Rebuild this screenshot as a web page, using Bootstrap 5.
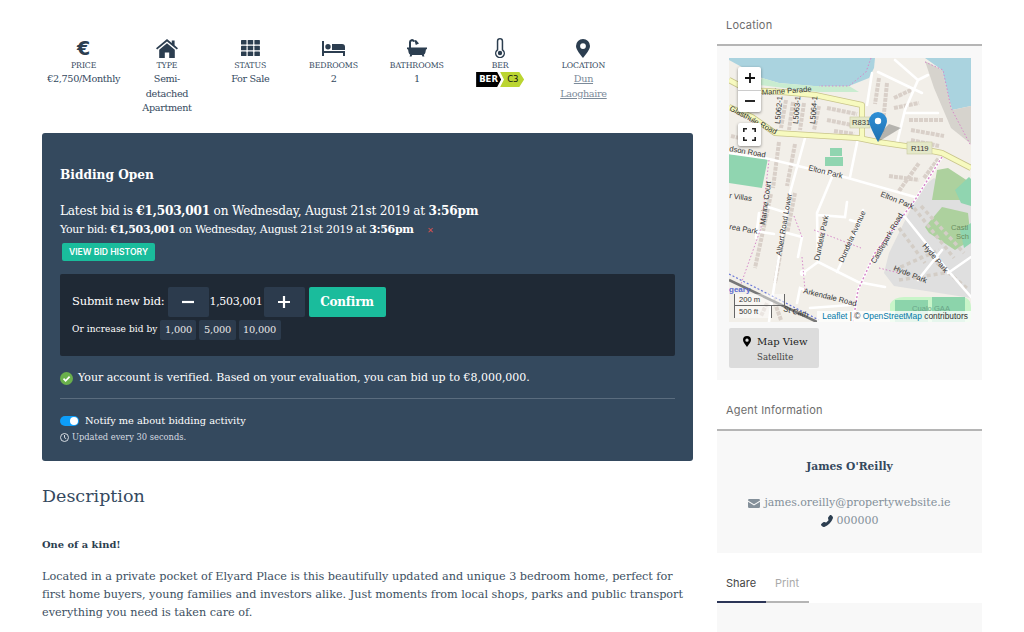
<!DOCTYPE html>
<html lang="en">
<head>
<meta charset="utf-8">
<title>Property</title>
<link href="https://cdn.jsdelivr.net/npm/bootstrap@5.3.0/dist/css/bootstrap.min.css" rel="stylesheet">
<style>
html,body{height:632px;overflow:hidden;background:#fff}
body{font-family:"DejaVu Serif","Liberation Serif",serif;color:#34495e;font-size:11.5px}
.page-wrap{padding-left:42px;gap:24px}
.main-col{width:651px;flex:none}
.side-col{width:265px;flex:none}
.facts{padding-top:38px;height:133px}
.fact{flex:0 0 83.3px;line-height:14.5px;font-size:9.7px;letter-spacing:-.35px;white-space:nowrap;display:flex;flex-direction:column;align-items:center}
.fact-ico{height:20px;display:flex;align-items:center;justify-content:center}
.fact-ico svg{fill:#2c3e50;display:block}
.euro{font-family:"DejaVu Sans",sans-serif;font-weight:700;font-size:19px;color:#2c3e50;line-height:18px;letter-spacing:0}
.fact-label{font-size:7.8px;text-transform:uppercase;line-height:13px;margin-top:1px;letter-spacing:-.1px}
.fact a{color:#7b8a99}
.ber-tag{display:inline-flex;height:15px;font-family:"DejaVu Sans",sans-serif;font-size:8.5px;line-height:15px;letter-spacing:0}
.ber-a{width:25px;background:#000;color:#fff;font-weight:700;clip-path:polygon(0 0,84% 0,100% 50%,84% 100%,0 100%);padding-left:3px;text-align:left}
.ber-b{width:24px;margin-left:-1px;background:#bbd531;color:#111;clip-path:polygon(0 0,80% 0,100% 50%,80% 100%,0 100%,16% 50%);padding-left:7px;text-align:left}
.bid-panel{background:#34495e;color:#fff;border-radius:3px;height:328px;padding:33px 18px 0}
.bid-title{font-size:12.2px;font-weight:700;line-height:18px;margin:0 0 18px}
.bid-latest{font-size:12.1px;line-height:19px;letter-spacing:-.21px}
.bid-your{font-size:11px;line-height:18px;letter-spacing:-.34px}
.bid-x{color:#d9534f;font-size:8px;margin-left:10px}
.hist-btn{background:#1abc9c;color:#fff;border:0;border-radius:2px;font-family:"Inter",sans-serif;font-weight:600;font-size:8.6px;padding:0;width:93px;height:18px;line-height:18px;margin:3px 0 0 2px;display:block}
.bid-box{background:#1f2935;border-radius:2px;height:82px;margin-top:13px;padding:13px 12px 0}
.bid-lab{font-size:11.5px;letter-spacing:-.2px;margin-right:3px}
.step{background:#2c3b4d;color:#fff;border:0;border-radius:2px;width:41px;height:30px;padding:0;display:flex;align-items:center;justify-content:center}
.step svg{stroke:#fff;stroke-width:2.2}
.confirm{background:#1abc9c;color:#fff;border:0;border-radius:2px;height:30px;width:77px;padding:0;font-size:12px;font-weight:700;letter-spacing:-.2px}
.confirm:hover,.hist-btn:hover{background:#1abc9c;color:#fff}
.bid-val{font-size:11px;width:55px;text-align:center;letter-spacing:-.35px}
.inc-row{margin-top:3px;font-size:9px;height:20px;gap:3px}
.inc-lab{letter-spacing:.07px}
.inc{background:#2c3b4d;color:#e8e8e8;border:0;border-radius:2px;height:20px;padding:0 4.5px;font-size:9.8px;line-height:20px;letter-spacing:-.2px}
.verified{font-size:11px;margin-top:14px;line-height:16px;gap:5px;letter-spacing:-.02px}
.bid-rule{border:0;border-top:1px solid #5a6c7e;opacity:1;margin:12px 0 15px}
.sw-row{height:14px;gap:6px;font-size:9.8px}
.sw{appearance:none;width:19px;height:10px;border-radius:5px;background:#0d9efa;position:relative;margin:0;flex:none}
.sw::after{content:"";position:absolute;right:1px;top:1px;width:8px;height:8px;border-radius:50%;background:#fff}
.upd{font-size:8.3px;color:#d6dbe0;margin-top:2px;line-height:14px;gap:3px}
.desc-h{font-size:17.5px;font-weight:400;line-height:24px;margin:23px 0 0;color:#34495e}
.desc-b{font-size:9.9px;font-weight:700;margin:29px 0 0;line-height:16px;color:#2c3e50}
.desc-p{font-size:11.25px;line-height:18px;margin:15px 0 0;color:#3c4f62;letter-spacing:-.03px}
.side-h{font-family:"Inter","Open Sans",sans-serif;font-size:11px;letter-spacing:.2px;color:#6d6d6d;height:46px;line-height:50px;padding-left:9px;border-bottom:2px solid #b5b5b5;margin:0}
.side-body{background:#f8f8f8}
.map-sec{height:334px;padding:12px 12px 0}
.map-box{position:relative;width:242px;height:264px;overflow:hidden;background:#f2efe9}
.map-box>svg{display:block}
.map-box text{font-family:"Liberation Sans",sans-serif;font-size:7.6px;fill:#333}
.lf-ctl{position:absolute;left:9px;background:#fff;width:23px;box-shadow:0 1px 3px rgba(0,0,0,.45);border-radius:2px;display:flex;flex-direction:column;align-items:center;justify-content:center}
.lf-zoom{top:9px;height:45px}
.lf-zoom span{height:22.5px;width:100%;display:flex;align-items:center;justify-content:center}
.lf-zoom span+span{border-top:1px solid #ccc}
.lf-full{top:65px;height:23px}
.pin{position:absolute;left:140px;top:54px}
.attr{position:absolute;right:0;bottom:0;background:rgba(255,255,255,.78);font-family:"Liberation Sans",sans-serif;font-size:8.4px;line-height:11px;padding:0 3px 0 5px;color:#333;white-space:nowrap}
.attr a{color:#0078a8;text-decoration:none}
.scale-a,.scale-b{position:absolute;left:5px;font-family:"Liberation Sans",sans-serif;font-size:7.6px;color:#333;background:rgba(255,255,255,.45);padding-left:4px;line-height:11px;height:12px;border-left:1.5px solid #666;border-right:1.5px solid #666}
.scale-a{top:236px;width:51px;border-bottom:1.5px solid #666}
.scale-b{top:248px;width:38px}
.map-btn{background:#dcdcdc;border:0;border-radius:2px;width:90px;height:40px;margin-top:6px;display:block;padding:0;color:#333;text-align:left}
.map-btn-t{font-size:10px;line-height:16px;gap:6px;padding-left:14px;padding-top:1px;color:#222}
.map-btn-s{font-size:8.6px;line-height:14px;padding-left:28px;color:#444}
.agent-h{height:51px;line-height:60px}
.agent-body{height:122px;text-align:center;padding-top:28px}
.agent-name{font-size:10.7px;font-weight:700;line-height:16px;color:#34495e;margin:0}
.agent-mail{font-size:11px;color:#84909a;line-height:18px;margin-top:19px;gap:4px;letter-spacing:-.03px}
.agent-tel{font-size:11px;color:#84909a;line-height:18px;gap:4px}
.tabs-row{height:50px;font-family:"Inter","Open Sans",sans-serif;font-size:11px;line-height:60px}
.tab-on{width:49px;padding-left:9px;border-bottom:2px solid #2c3557;color:#444}
.tab-off{width:43px;padding-left:9px;border-bottom:2px solid #b5b5b5;color:#aaa}
.share-body{height:60px}
</style>
</head>
<body>
<div class="d-flex page-wrap">
  <div class="main-col">
    <div class="d-flex facts text-center">
      <div class="fact">
        <div class="fact-ico"><span class="euro">€</span></div>
        <div class="fact-label">Price</div>
        <div>€2,750/Monthly</div>
      </div>
      <div class="fact">
        <div class="fact-ico"><svg width="22" height="19" viewBox="0 0 22 19"><path d="M11 0 15.8 4V1.500h2.800v4.800L22 9.200l-1.200 1.400L11 2.500 1.200 10.600 0 9.200z"/><path d="M11 4.200 3.200 10.700V19h5.600v-5.500h4.400V19h5.600v-8.300z"/></svg></div>
        <div class="fact-label">Type</div>
        <div>Semi-<br>detached<br>Apartment</div>
      </div>
      <div class="fact">
        <div class="fact-ico"><svg width="19" height="16" viewBox="0 0 19 16"><rect width="5.500" height="4.600" rx=".6"/><rect x="6.700" width="5.500" height="4.600" rx=".6"/><rect x="13.400" width="5.500" height="4.600" rx=".6"/><rect y="5.700" width="5.500" height="4.600" rx=".6"/><rect x="6.700" y="5.700" width="5.500" height="4.600" rx=".6"/><rect x="13.400" y="5.700" width="5.500" height="4.600" rx=".6"/><rect y="11.400" width="5.500" height="4.600" rx=".6"/><rect x="6.700" y="11.400" width="5.500" height="4.600" rx=".6"/><rect x="13.400" y="11.400" width="5.500" height="4.600" rx=".6"/></svg></div>
        <div class="fact-label">Status</div>
        <div>For Sale</div>
      </div>
      <div class="fact">
        <div class="fact-ico"><svg width="23" height="15" viewBox="0 0 23 15"><path d="M0 0h2v10h21v5h-2v-3H2v3H0z"/><circle cx="6" cy="5.800" r="2.700"/><path d="M10 3h10a3 3 0 0 1 3 3v3H10z"/></svg></div>
        <div class="fact-label">Bedrooms</div>
        <div>2</div>
      </div>
      <div class="fact">
        <div class="fact-ico"><svg width="20" height="18" viewBox="0 0 20 18"><path d="M2 9V3a3 3 0 0 1 5.600-1.400L9 1l3 3.500-3.200 1.600-1-3.600L6.200 3A1.200 1.200 0 0 0 4 3v6z"/><path d="M0 8.500h20v1.800h-1l-.6 3.200a3 3 0 0 1-1.600 2.200l.6 1.800h-2l-.5-1.500H5.100L4.600 17.500h-2l.6-1.800a3 3 0 0 1-1.600-2.200L1 10.300H0z"/></svg></div>
        <div class="fact-label">Bathrooms</div>
        <div>1</div>
      </div>
      <div class="fact">
        <div class="fact-ico"><svg width="10" height="20" viewBox="0 0 10 20"><path fill-rule="evenodd" d="M5 0a3.200 3.200 0 0 1 3.200 3.200v8.200a5 5 0 1 1-6.400 0V3.200A3.200 3.200 0 0 1 5 0zm0 1.500c-1 0-1.700.7-1.700 1.700v9l-.6.5a3.500 3.500 0 1 0 4.600 0l-.6-.5v-9C6.700 2.200 6 1.500 5 1.500z"/><circle cx="5" cy="15" r="2.200"/></svg></div>
        <div class="fact-label">BER</div>
        <div><span class="ber-tag"><span class="ber-a">BER</span><span class="ber-b">C3</span></span></div>
      </div>
      <div class="fact">
        <div class="fact-ico"><svg width="14" height="19" viewBox="0 0 14 19"><path fill-rule="evenodd" d="M7 0a7 7 0 0 1 7 7c0 3.600-4.500 9-7 12-2.500-3-7-8.400-7-12a7 7 0 0 1 7-7zm0 4.200a2.900 2.900 0 1 0 0 5.800 2.900 2.900 0 0 0 0-5.800z"/></svg></div>
        <div class="fact-label">Location</div>
        <div><a href="#">Dun<br>Laoghaire</a></div>
      </div>
    </div>

    <div class="bid-panel">
      <h5 class="bid-title">Bidding Open</h5>
      <div class="bid-latest">Latest bid is <b>€1,503,001</b> on Wednesday, August 21st 2019 at <b>3:56pm</b></div>
      <div class="bid-your">Your bid: <b>€1,503,001</b> on Wednesday, August 21st 2019 at <b>3:56pm</b> <span class="bid-x">✕</span></div>
      <button class="btn hist-btn" type="button">VIEW BID HISTORY</button>
      <div class="bid-box">
        <div class="d-flex align-items-center">
          <span class="bid-lab">Submit new bid:</span>
          <button class="btn step" type="button" aria-label="minus"><svg width="12" height="12" viewBox="0 0 12 12"><path d="M0 6h12"/></svg></button>
          <span class="bid-val">1,503,001</span>
          <button class="btn step" type="button" aria-label="plus"><svg width="12" height="12" viewBox="0 0 12 12"><path d="M0 6h12M6 0v12"/></svg></button>
          <button class="btn confirm ms-1" type="button">Confirm</button>
        </div>
        <div class="d-flex align-items-center inc-row">
          <span class="inc-lab">Or increase bid by</span>
          <span class="inc">1,000</span><span class="inc">5,000</span><span class="inc">10,000</span>
        </div>
      </div>
      <div class="d-flex align-items-center verified">
        <svg width="13" height="13" viewBox="0 0 13 13"><circle cx="6.500" cy="6.500" r="6.500" fill="#6ab04c"/><path d="M3.500 6.700 5.600 8.800 9.600 4.600" fill="none" stroke="#fff" stroke-width="1.700"/></svg>
        <span>Your account is verified. Based on your evaluation, you can bid up to €8,000,000.</span>
      </div>
      <hr class="bid-rule">
      <div class="d-flex align-items-center sw-row">
        <input class="sw" type="checkbox" checked aria-label="notify">
        <span>Notify me about bidding activity</span>
      </div>
      <div class="d-flex align-items-center upd">
        <svg width="9" height="9" viewBox="0 0 9 9" fill="none" stroke="#d6dbe0"><circle cx="4.500" cy="4.500" r="4"/><path d="M4.500 2v2.700l1.700 1"/></svg>
        <span>Updated every 30 seconds.</span>
      </div>
    </div>

    <h3 class="desc-h">Description</h3>
    <p class="desc-b">One of a kind!</p>
    <p class="desc-p">Located in a private pocket of Elyard Place is this beautifully updated and unique 3 bedroom home, perfect for<br>first home buyers, young families and investors alike. Just moments from local shops, parks and public transport<br>everything you need is taken care of.</p>
  </div>

  <div class="side-col">
    <h6 class="side-h fw-normal">Location</h6>
    <div class="side-body map-sec">
      <div class="map-box">
        <svg width="242" height="264" viewBox="0 0 242 264">
          <rect width="242" height="264" fill="#f2efe9"/>
          <path d="M0 0H146L145 10 140 20 120 28 85 28 50 25 33 20 0 2z" fill="#aad3df"/>
          <path d="M196 0H242V48L223 52 213 12z" fill="#aad3df"/>
          <path d="M196 3 213 12 223 52 242 48V86L222 70 205 30z" fill="#d6d3cd"/>
          <path d="M33 20 50 25 85 28 120 28 130 34 90 34 55 30 30 27z" fill="#c9ecd0"/>
          <path d="M0 96 39 100 33 130 0 125z" fill="#90d5b0"/>
          <path d="M101 90H113V98H101zM96 99H114V108H96z" fill="#90d5b0"/>
          <path d="M192 130 205 120 242 145V240L165 228 155 215 160 195z" fill="#dfdfdf"/>
          <path d="M196 169 213 149 239 155 242 182 226 192 200 175zM208 112 219 110 242 125V142H203z" fill="#add19e"/>
          <path d="M226 132 240 119 242 121V148L232 145zM231 172 242 165V185L235 190z" fill="#90d5b0"/>
          <path d="M161 264V246Q165 239 175 239H232Q242 239 242 250V264z" fill="#c9f5c9"/>
          <path d="M166 242H199V264H166zM203 239H236V264H203z" fill="#8cd4ab"/>
          <g fill="none" stroke="#d9d0c9" stroke-width="4" stroke-dasharray="4 1">
            <path d="M57 42 52 70M64 44 60 72M75 45 71 72M90 48 85 72M98 50 128 56M98 62 128 68M105 73 125 76"/>
            <path d="M150 20 146 46M158 25 153 75M165 40 182 32M165 50 190 45M180 62 215 62M182 72 215 78M182 82 210 88"/>
            <path d="M2 78 20 82M50 84 44 130M66 86 58 128M42 136 26 210M66 135 58 176M56 170 46 225M38 245 32 258"/>
            <path d="M160 118 190 122M170 133 190 105M195 120 210 100"/>
            <path d="M52 262 44 240"/>
          </g>
          <g fill="none" stroke="#d3cdc6" stroke-width="3.500" stroke-dasharray="4 3">
            <path d="M185 150 225 200M192 148 235 195M170 170 196 205M165 212 210 192M170 222 222 214M208 205 240 232"/>
          </g>
          <g fill="none" stroke="#fff" stroke-linecap="round" stroke-width="2.600">
            <path d="M143 15 138 47M149 14 193 35M166 2 189 22 176 52 168 85M189 22 199 17M176 55 209 55"/>
            <path d="M129 80 121 119M76 80 59 142 43 242 40 264M0 95 36 100 119 120 186 139"/>
            <path d="M103 119 88 155 89 204 129 224 156 229M89 157 116 159 118 144M134 152 126 175 108 214M121 162 131 165M89 204 74 215"/>
            <path d="M213 99 186 142 146 195 129 232 124 264M176 159 216 209 242 239M213 192 189 222M242 199 219 215"/>
            <path d="M39 149 58 155M58 175 73 179 69 199M30 155 27 180M20 172 45 176M68 245 71 230 76 232M81 250 122 247"/>
          </g>
          <circle cx="74" cy="215" r="3.200" fill="#fff"/>
          <g fill="none" stroke="#f7fabf" stroke-linejoin="round">
            <path d="M0 22 19 32 53 34 86 37 133 47 133 79" stroke="#c8c48a" stroke-width="6"/>
            <path d="M0 49 23 59 46 75 129 80 149 84 183 89 213 95 242 110" stroke="#c8c48a" stroke-width="6"/>
            <path d="M0 22 19 32 53 34 86 37 133 47 133 79" stroke-width="4.500"/>
            <path d="M0 49 23 59 46 75 129 80 149 84 183 89 213 95 242 110" stroke-width="4.500"/>
          </g>
          <g fill="none" stroke="#d689c9" stroke-width="1" stroke-dasharray="1.500 2">
            <path d="M142 0 137 14 120 28 90 28M196 4 214 12 222 50 242 88M40 102 32 170 12 226M65 158 73 179M73 199 76 232M85 172 132 190M150 210 170 215"/>
          </g>
          <path d="M213 99 186 142 146 195 129 232 124 264" stroke="#d689c9" stroke-width="1.500" stroke-dasharray="2 2" fill="none"/>
          <path d="M0 222 88 264" stroke="#777" stroke-width="2.500"/>
          <path d="M0 216 90 262" stroke="#6a78d8" stroke-width="1.200" stroke-dasharray="2 2" fill="none"/>
          <text x="33" y="37" transform="rotate(-4 33 37)">Marine Parade</text>
          <text x="0" y="52" transform="rotate(28 0 52)">Glasthule Road</text>
          <text x="0" y="93" transform="rotate(10 0 93)">dson Road</text>
          <text x="79" y="112" transform="rotate(14 79 112)">Elton Park</text>
          <text x="151" y="138" transform="rotate(22 151 138)">Elton Park</text>
          <text x="51" y="66" transform="rotate(-85 51 66)">L5062-1</text>
          <text x="69" y="66" transform="rotate(-85 69 66)">L5063-1</text>
          <text x="86" y="66" transform="rotate(-85 86 66)">L5064-1</text>
          <text x="36" y="167" transform="rotate(-82 36 167)">Marine Court</text>
          <text x="52" y="198" transform="rotate(-80 52 198)">Albert Road Lower</text>
          <text x="90" y="203" transform="rotate(-78 90 203)">Dundela Park</text>
          <text x="114" y="205" transform="rotate(-66 114 205)">Dundela Avenue</text>
          <text x="146" y="206" transform="rotate(-60 146 206)">Castlepark Road</text>
          <text x="164" y="212" transform="rotate(22 164 212)">Hyde Park</text>
          <text x="193" y="188" transform="rotate(50 193 188)">Hyde Park</text>
          <text x="74" y="235" transform="rotate(14 74 235)">Arkendale Road</text>
          <text x="54" y="253" transform="rotate(15 54 253)">St Cath</text>
          <text x="0" y="171" transform="rotate(10 0 171)">rea Park</text>
          <text x="0" y="140" transform="rotate(8 0 140)">r Villas</text>
          <text x="0" y="234" style="fill:#5a6bd0;font-weight:700;font-size:8px">geary</text>
          <text x="222" y="172" style="fill:#6b8f5e">Castl</text>
          <text x="227" y="181" style="fill:#6b8f5e">Sch</text>
          <text x="183" y="253" style="fill:#6aa488">Cualo GAA</text>
          <rect x="121" y="59" width="20" height="11" fill="#e4e8c8" stroke="#c8c8a0" stroke-width=".6"/>
          <text x="123" y="67">R831</text>
          <rect x="178" y="84" width="25" height="12" fill="#e4e8c8" stroke="#c8c8a0" stroke-width=".6"/>
          <text x="182" y="93">R119</text>
          <path d="M149 84 172 70 160 66 150 76z" fill="#000" opacity=".25"/>
        </svg>
        <div class="pin"><svg width="18" height="30" viewBox="0 0 18 30"><defs><linearGradient id="pg" x1="0" y1="0" x2="0" y2="1"><stop offset="0" stop-color="#2e8fd6"/><stop offset="1" stop-color="#1e6fb0"/></linearGradient></defs><path d="M9 0a9 9 0 0 1 9 9c0 4-5 13-9 21C5 22 0 13 0 9a9 9 0 0 1 9-9z" fill="url(#pg)"/><circle cx="9" cy="9" r="3.200" fill="#fff"/></svg></div>
        <div class="lf-ctl lf-zoom">
          <span><svg width="10" height="10" viewBox="0 0 10 10"><path d="M0 5h10M5 0v10" stroke="#111" stroke-width="1.800"/></svg></span>
          <span><svg width="10" height="10" viewBox="0 0 10 10"><path d="M0 5h10" stroke="#111" stroke-width="1.800"/></svg></span>
        </div>
        <div class="lf-ctl lf-full"><svg width="13" height="13" viewBox="0 0 13 13" fill="none" stroke="#222" stroke-width="1.600"><path d="M0.800 4V.8H4M9 .8h3.200V4M12.200 9v3.200H9M4 12.200H.8V9"/></svg></div>
        <div class="scale-a">200 m</div>
        <div class="scale-b">500 ft</div>
        <div class="attr"><a href="#">Leaflet</a> | © <a href="#">OpenStreetMap</a> contributors</div>
      </div>
      <button class="btn map-btn" type="button">
        <div class="d-flex align-items-center map-btn-t"><svg width="8" height="11" viewBox="0 0 14 19"><path fill-rule="evenodd" d="M7 0a7 7 0 0 1 7 7c0 3.600-4.500 9-7 12-2.500-3-7-8.400-7-12a7 7 0 0 1 7-7zm0 4.200a2.900 2.900 0 1 0 0 5.800 2.900 2.900 0 0 0 0-5.800z"/></svg><span>Map View</span></div>
        <div class="map-btn-s">Satellite</div>
      </button>
    </div>

    <h6 class="side-h fw-normal agent-h">Agent Information</h6>
    <div class="side-body agent-body">
      <p class="agent-name">James O'Reilly</p>
      <div class="d-flex align-items-center justify-content-center agent-mail"><svg width="12" height="9" viewBox="0 0 12 9" fill="#84909a"><path d="M0 1.200A1.200 1.200 0 0 1 1.200 0h9.600A1.200 1.200 0 0 1 12 1.200v.3L6 5.300 0 1.500zM0 2.800 6 6.600l6-3.800v5A1.200 1.200 0 0 1 10.800 9H1.200A1.200 1.200 0 0 1 0 7.800z"/></svg><span>james.oreilly@propertywebsite.ie</span></div>
      <div class="d-flex align-items-center justify-content-center agent-tel"><svg width="12" height="12" viewBox="0 0 16 16" fill="#2c3e50"><path transform="matrix(-1 0 0 1 16 0)" d="M1.885.511a1.745 1.745 0 0 1 2.610.163L6.290 2.980c.329.423.445.974.315 1.494l-.547 2.190a.678.678 0 0 0 .178.643l2.457 2.457a.678.678 0 0 0 .644.178l2.189-.547a1.745 1.745 0 0 1 1.494.315l2.306 1.794c.829.645.905 1.870.163 2.611l-1.034 1.034c-.74.74-1.846 1.065-2.877.702a18.634 18.634 0 0 1-7.010-4.420 18.634 18.634 0 0 1-4.420-7.009c-.362-1.030-.037-2.137.703-2.877L1.885.511z"/></svg><span>000000</span></div>
    </div>

    <div class="d-flex tabs-row">
      <div class="tab-on">Share</div>
      <div class="tab-off">Print</div>
    </div>
    <div class="side-body share-body"></div>
  </div>
</div>
<script src="https://cdn.jsdelivr.net/npm/bootstrap@5.3.0/dist/js/bootstrap.bundle.min.js"></script>
</body>
</html>
